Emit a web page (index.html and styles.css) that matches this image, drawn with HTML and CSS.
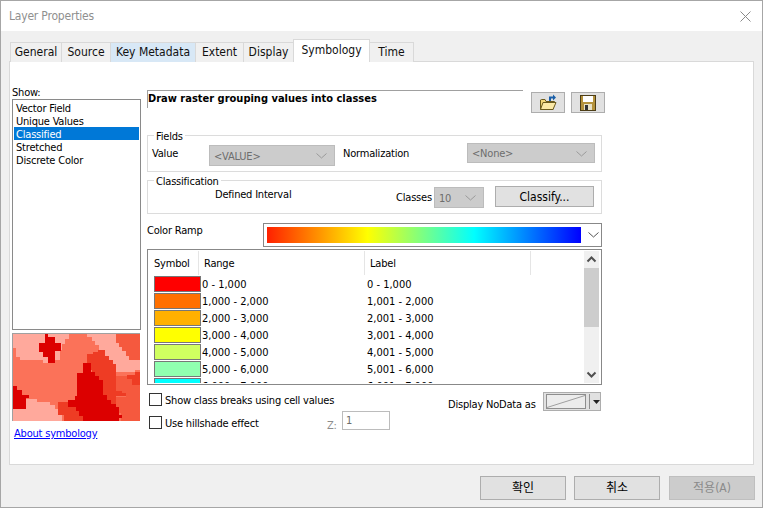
FILE: index.html
```html
<!DOCTYPE html>
<html lang="en">
<head>
<meta charset="utf-8">
<title>Layer Properties</title>
<link rel="stylesheet" href="styles.css">
</head>
<body>
<div class="window">
  <header class="titlebar">
    <span class="title">Layer Properties</span>
    <svg class="close" width="11" height="11" viewBox="0 0 11 11"><path d="M0.5 0.5L10.5 10.5M10.5 0.5L0.5 10.5" stroke="#8a8a8a" stroke-width="1" fill="none"/></svg>
  </header>
  <div class="content">
    <nav class="tabs">
      <span class="tab">General</span>
      <span class="tab">Source</span>
      <span class="tab tab-hover">Key Metadata</span>
      <span class="tab">Extent</span>
      <span class="tab">Display</span>
      <span class="tab tab-active">Symbology</span>
      <span class="tab">Time</span>
    </nav>
    <main class="panel">
      <aside class="left">
        <div class="show-label">Show:</div>
        <ul class="listbox">
          <li>Vector Field</li>
          <li>Unique Values</li>
          <li class="selected">Classified</li>
          <li>Stretched</li>
          <li>Discrete Color</li>
        </ul>
        <svg class="thumb" width="128" height="88" viewBox="39 41 384 264" shape-rendering="crispEdges" preserveAspectRatio="none">
          <rect x="39" y="41" width="384" height="264" fill="#fb7259"/>
          <polygon fill="#ffa99c" points="39,41 225,41 207,41 207,55 195,55 195,72 186,72 186,90 180,90 180,120 165,120 165,128 130,128 130,120 60,120 60,111 48,111 48,84 39,84"/>
          <polygon fill="#ffa99c" points="264,41 351,41 351,69 360,69 360,81 369,81 369,93 381,93 381,108 390,108 390,120 423,120 423,150 408,150 408,156 351,156 351,132 342,132 342,120 330,120 330,108 318,108 318,90 300,90 300,75 288,75 288,63 279,63 279,51 264,51"/>
          <polygon fill="#f5593e" points="351,41 423,41 423,120 390,120 390,108 381,108 381,93 369,93 369,81 360,81 360,69 351,69"/>
          <polygon fill="#f5593e" points="351,168 384,168 384,177 399,177 399,186 423,186 423,305 366,305 366,282 357,282 357,270 351,270 351,231 381,231 381,219 351,219"/>
          <polygon fill="#ee3c24" points="264,102 282,102 282,96 297,96 297,90 318,90 318,108 330,108 330,120 342,120 342,132 351,132 351,213 369,213 369,219 381,219 381,228 351,228 351,255 333,255 333,240 324,240 312,240 312,192 300,192 300,177 288,177 288,162 279,162 279,150 270,150 270,129 264,129"/>
          <polygon fill="#ee3c24" points="384,165 408,165 408,156 423,156 423,195 399,195 399,177 384,177"/>
          <polygon fill="#dc0000" points="135,41 145,41 145,51 165,51 165,69 183,69 183,93 165,93 165,129 145,129 145,111 130,111 130,96 118,96 118,69 135,69"/>
          <polygon fill="#dc0000" points="252,129 276,129 276,156 288,156 288,168 300,168 300,180 312,180 312,225 324,225 324,240 336,240 336,252 351,252 351,264 360,264 360,288 369,288 369,296 360,296 360,305 240,305 240,282 225,282 225,270 205,270 205,240 225,240 225,228 234,228 234,159 252,159"/>
          <polygon fill="#ee3c24" points="174,246 205,246 205,264 228,264 228,276 240,276 240,291 252,291 252,305 192,305 192,288 174,288"/>
          <polygon fill="#dc0000" points="39,198 51,198 51,210 66,210 66,225 87,225 87,234 78,234 78,268 39,268"/>
          <polygon fill="#ffa99c" points="39,268 78,268 78,237 111,237 111,246 150,246 150,255 165,255 165,270 174,270 174,288 186,288 186,305 39,305"/>
        </svg>
        <a class="about" href="#">About symbology</a>
      </aside>
      <section class="right">
        <div class="heading-row">
          <div class="heading">Draw raster grouping values into classes</div>
          <button class="icon-btn first">
            <svg width="18" height="17" viewBox="0 0 18 17">
              <path d="M1.5 6V15.5H14L15.5 7.5H7L6 5.5H2.5Z" fill="#f3d77a" stroke="#6b5a1c"/>
              <path d="M1.5 15.5L4 8.5H17L14 15.5Z" fill="#fbe9a6" stroke="#6b5a1c"/>
              <path d="M10 2.5H14V0.5L17 3.5L14 6.5V4.5H12V7H10Z" fill="#1a5fa8"/>
            </svg>
          </button>
          <button class="icon-btn">
            <svg width="16" height="16" viewBox="0 0 16 16">
              <rect x="0.5" y="0.5" width="15" height="15" fill="#b4923c" stroke="#4c3d17"/>
              <rect x="3" y="1" width="10" height="6" fill="#ffffff"/>
              <rect x="4" y="9" width="8" height="6" fill="#e8e2c8"/>
              <rect x="5" y="10" width="3" height="5" fill="#333333"/>
            </svg>
          </button>
        </div>
        <div class="group fields">
          <span class="legend">Fields</span>
          <div class="fields-row">
            <span class="lbl lbl-value">Value</span>
            <div class="select sel-value"><span>&lt;VALUE&gt;</span><svg width="11" height="6" viewBox="0 0 11 6"><path d="M0.5 0.5L5.5 5L10.5 0.5" stroke="#9a9a9a" fill="none"/></svg></div>
            <span class="lbl lbl-norm">Normalization</span>
            <div class="select sel-none"><span>&lt;None&gt;</span><svg width="11" height="6" viewBox="0 0 11 6"><path d="M0.5 0.5L5.5 5L10.5 0.5" stroke="#9a9a9a" fill="none"/></svg></div>
          </div>
        </div>
        <div class="group classification">
          <span class="legend">Classification</span>
          <div class="class-row">
            <span class="lbl lbl-interval">Defined Interval</span>
            <span class="lbl lbl-classes">Classes</span>
            <div class="select sel-classes"><span>10</span><svg width="11" height="6" viewBox="0 0 11 6"><path d="M0.5 0.5L5.5 5L10.5 0.5" stroke="#9a9a9a" fill="none"/></svg></div>
            <button class="btn btn-classify">Classify...</button>
          </div>
        </div>
        <div class="ramp-row">
          <span class="lbl lbl-ramp">Color Ramp</span>
          <div class="ramp">
            <div class="ramp-bar"></div>
            <svg width="11" height="6" viewBox="0 0 11 6"><path d="M0.5 0.5L5.5 5L10.5 0.5" stroke="#555" fill="none"/></svg>
          </div>
        </div>
        <div class="table">
          <div class="table-main">
            <div class="thead">
              <span class="th th-symbol">Symbol</span>
              <span class="th th-range">Range</span>
              <span class="th th-label">Label</span>
            </div>
            <div class="tr"><i class="swatch c1"></i><span class="range">0 - 1,000</span><span class="label">0 - 1,000</span></div>
            <div class="tr"><i class="swatch c2"></i><span class="range">1,000 - 2,000</span><span class="label">1,001 - 2,000</span></div>
            <div class="tr"><i class="swatch c3"></i><span class="range">2,000 - 3,000</span><span class="label">2,001 - 3,000</span></div>
            <div class="tr"><i class="swatch c4"></i><span class="range">3,000 - 4,000</span><span class="label">3,001 - 4,000</span></div>
            <div class="tr"><i class="swatch c5"></i><span class="range">4,000 - 5,000</span><span class="label">4,001 - 5,000</span></div>
            <div class="tr"><i class="swatch c6"></i><span class="range">5,000 - 6,000</span><span class="label">5,001 - 6,000</span></div>
            <div class="tr"><i class="swatch c7"></i><span class="range">6,000 - 7,000</span><span class="label">6,001 - 7,000</span></div>
          </div>
          <div class="scrollbar">
            <svg class="arrow" width="15" height="17" viewBox="0 0 15 17"><path d="M3.5 10.5L7.5 6.5L11.5 10.5" stroke="#505050" stroke-width="2" fill="none"/></svg>
            <div class="thumb-bar"></div>
            <svg class="arrow arrow-down" width="15" height="17" viewBox="0 0 15 17"><path d="M3.5 6.5L7.5 10.5L11.5 6.5" stroke="#505050" stroke-width="2" fill="none"/></svg>
          </div>
        </div>
        <div class="options">
          <div class="options-left">
            <label class="check"><i class="box"></i><span class="check-text">Show class breaks using cell values</span></label>
            <div class="hillshade">
              <label class="check"><i class="box"></i><span class="check-text">Use hillshade effect</span></label>
              <span class="z">Z:</span>
              <div class="z-input">1</div>
            </div>
          </div>
          <div class="nodata">
            <span class="lbl">Display NoData as</span>
            <div class="nodata-btn">
              <svg width="40" height="15" viewBox="0 0 40 15"><rect x="0.5" y="0.5" width="39" height="14" fill="#ececec" stroke="#8e8e8e"/><path d="M1 13.5L39 1.5" stroke="#a0a0a0" fill="none"/></svg>
              <span class="nodata-sep"></span>
              <svg width="7" height="4" viewBox="0 0 7 4"><path d="M0 0H7L3.5 4Z" fill="#222"/></svg>
            </div>
          </div>
        </div>
      </section>
      <div class="about-spacer"></div>
    </main>
    <footer class="footer">
      <button class="btn btn-foot">확인</button>
      <button class="btn btn-foot">취소</button>
      <button class="btn btn-foot btn-disabled">적용(A)</button>
    </footer>
  </div>
</div>
</body>
</html>
```

FILE: styles.css
```css
* { box-sizing: border-box; }
html, body { margin: 0; padding: 0; }
body {
  width: 763px;
  height: 508px;
  overflow: hidden;
  font-family: "DejaVu Sans Condensed", "Noto Sans CJK KR", sans-serif;
  font-size: 11px;
  line-height: 13px;
  letter-spacing: -0.2px;
  color: #000;
}
.window {
  width: 763px;
  height: 508px;
  border: 1px solid #a6a6a6;
  display: flex;
  flex-direction: column;
  background: #f0f0f0;
}
.titlebar {
  height: 30px;
  background: #fff;
  display: flex;
  align-items: center;
  justify-content: space-between;
  padding: 0 11px 0 8px;
  flex: none;
}
.title { color: #8f8f8f; font-size: 12px; }
.content { flex: 1; padding: 8px 8px 0 8px; display: flex; flex-direction: column; }
.tabs {
  display: grid;
  grid-template-columns: 52px 49px 85px 48px 50px 76px 44px;
  height: 23px;
  margin-left: 1px;
  margin-bottom: -1px;
  align-items: end;
  position: relative;
  z-index: 1;
}
.tab {
  height: 20px;
  border: 1px solid #d9d9d9;
  border-bottom: none;
  border-left-width: 0;
  background: #f0f0f0;
  text-align: center;
  line-height: 19px;
  font-size: 12px;
  letter-spacing: 0;
  color: #111;
}
.tab:first-child { border-left-width: 1px; }
.tab-hover { background: #d8e8f6; }
.tab-active {
  height: 23px;
  background: #fff;
  border-left-width: 1px;
  line-height: 21px;
  margin-left: -1px;
}
.panel {
  width: 745px;
  height: 404px;
  background: #fff;
  border: 1px solid #d9d9d9;
  display: flex;
  padding-left: 2px;
  flex: none;
}
.left { width: 129px; flex: none; display: flex; flex-direction: column; }
.show-label { margin-top: 24px; height: 13px; }
.listbox {
  list-style: none;
  margin: 0;
  padding: 1px 1px;
  height: 231px;
  border: 1px solid #8a8a8a;
}
.listbox li { height: 13px; padding-left: 2px; line-height: 15px; }
.listbox .selected { background: #0078d7; color: #fff; }
.thumb { display: block; margin-top: 3px; border-top: 1px solid #a0a0a0; border-left: 1px solid #a0a0a0; }
.about { margin: 6px 0 0 2px; color: #0000ff; text-decoration: underline; }
.right { width: 458px; margin-left: 6px; flex: none; display: flex; flex-direction: column; }
.about-spacer { flex: 1; }
.heading-row { display: flex; margin-top: 28px; height: 24px; width: 458px; }
.heading {
  width: 376px;
  height: 18px;
  border-top: 1px solid #a0a0a0;
  border-left: 1px solid #a0a0a0;
  font-weight: 700;
  letter-spacing: 0;
  padding-top: 1px;
}
.icon-btn {
  width: 34px;
  height: 21px;
  margin-top: 2px;
  padding: 0;
  background: #e1e1e1;
  border: 1px solid #adadad;
  display: flex;
  align-items: center;
  justify-content: center;
}
.icon-btn.first { margin-left: 8px; margin-right: 6px; }
.group { border: 1px solid #dcdcdc; width: 455px; }
.legend {
  display: block;
  width: fit-content;
  height: 13px;
  line-height: 15px;
  margin: -7px 0 0 6px;
  padding: 0 2px;
  background: #fff;
}
.fields { height: 37px; margin-top: 21px; }
.fields-row { display: flex; align-items: flex-start; padding-left: 4px; margin-top: 1px; }
.lbl { display: block; }
.lbl-value { width: 57px; margin-top: 4px; }
.select {
  background: #cccccc;
  border: 1px solid #bcbcbc;
  color: #6d6d6d;
  display: flex;
  align-items: center;
  justify-content: space-between;
  padding: 1px 7px 0 4px;
}
.sel-value { width: 126px; height: 21px; margin-top: 2px; }
.lbl-norm { width: 124px; margin: 4px 0 0 8px; }
.sel-none { width: 128px; height: 20px; }
.classification { height: 34px; margin-top: 8px; }
.class-row { display: flex; align-items: flex-start; }
.lbl-interval { margin: 1px 0 0 67px; width: 181px; }
.lbl-classes { width: 38px; margin-top: 4px; }
.sel-classes { width: 50px; height: 21px; margin-top: 0; }
.btn {
  font: inherit;
  background: #e1e1e1;
  border: 1px solid #adadad;
  padding: 0;
  color: #000;
}
.btn-classify { width: 99px; height: 21px; margin: -1px 0 0 11px; padding-top: 2px; font-size: 12px; }
.ramp-row { display: flex; margin-top: 9px; width: 455px; height: 24px; }
.lbl-ramp { width: 116px; margin-top: 1px; }
.ramp {
  flex: 1;
  border: 1px solid #888;
  padding: 3px 0 3px 3px;
  display: flex;
  align-items: center;
  gap: 6px;
}
.ramp-bar {
  width: 314px;
  height: 16px;
  background: linear-gradient(to right, #ff2000 0%, #ffff00 32%, #00ffff 66%, #0000ff 100%);
}
.ramp svg { margin-left: 1px; }
.table {
  width: 455px;
  height: 136px;
  margin-top: 2px;
  border: 1px solid #888;
  display: flex;
  padding: 1px 2px 1px 0;
}
.table-main { flex: 1; overflow: hidden; }
.thead { display: grid; grid-template-columns: 51px 166px 166px; height: 25px; }
.th { border-right: 1px solid #e5e5e5; padding-top: 6px; height: 24px; }
.th-symbol { padding-left: 6px; }
.th-range { padding-left: 5px; }
.th-label { padding-left: 5px; }
.tr { display: grid; grid-template-columns: 47px 166px auto; height: 17px; margin-left: 6px; align-items: start; }
.swatch { display: block; width: 47px; height: 16px; border: 1px solid #777; }
.c1 { background: #ff0000; }
.c2 { background: #ff7000; }
.c3 { background: #ffb000; }
.c4 { background: #ffff00; }
.c5 { background: #d0ff60; }
.c6 { background: #90ffb0; }
.c7 { background: #00ffff; }
.range { padding: 2px 0 0 1px; white-space: nowrap; letter-spacing: 0; }
.label { padding: 2px 0 0 0; white-space: nowrap; letter-spacing: 0; }
.scrollbar { width: 15px; flex: none; background: #f0f0f0; display: flex; flex-direction: column; }
.arrow { display: block; flex: none; }
.thumb-bar { height: 59px; background: #cdcdcd; }
.arrow-down { margin-top: auto; }
.options { display: flex; width: 455px; margin-top: 8px; }
.options-left { width: 301px; padding-left: 2px; }
.check { display: flex; align-items: center; height: 13px; gap: 3px; }
.check-text { line-height: 15px; height: 13px; }
.box { display: block; width: 13px; height: 13px; border: 1px solid #333; background: #fff; flex: none; }
.hillshade { display: flex; align-items: flex-start; margin-top: 2px; }
.hillshade .check { margin-top: 8px; width: 178px; }
.z { color: #8c8c8c; margin-top: 11px; width: 15px; }
.z-input { width: 48px; height: 19px; margin-top: 3px; border: 1px solid #bcbcbc; color: #6d6d6d; padding: 2px 3px; }
.nodata { display: flex; align-items: flex-start; margin-top: -1px; }
.nodata .lbl { width: 95px; margin-top: 6px; }
.nodata-btn {
  width: 58px;
  height: 19px;
  background: #e1e1e1;
  border: 1px solid #adadad;
  display: flex;
  align-items: center;
  padding-left: 2px;
}
.nodata-sep { width: 1px; height: 15px; margin: 0 3px 0 3px; background: #fff; border-left: 1px solid #8e8e8e; }
.footer { display: flex; justify-content: flex-end; padding: 11px 0 0 0; margin-right: -1px; }
.btn-foot { width: 86px; height: 24px; margin-left: 8px; font-size: 12px; letter-spacing: 0; }
.btn-disabled { background: #cccccc; border-color: #bfbfbf; color: #8a8a8a; margin-left: 9px; }
```
